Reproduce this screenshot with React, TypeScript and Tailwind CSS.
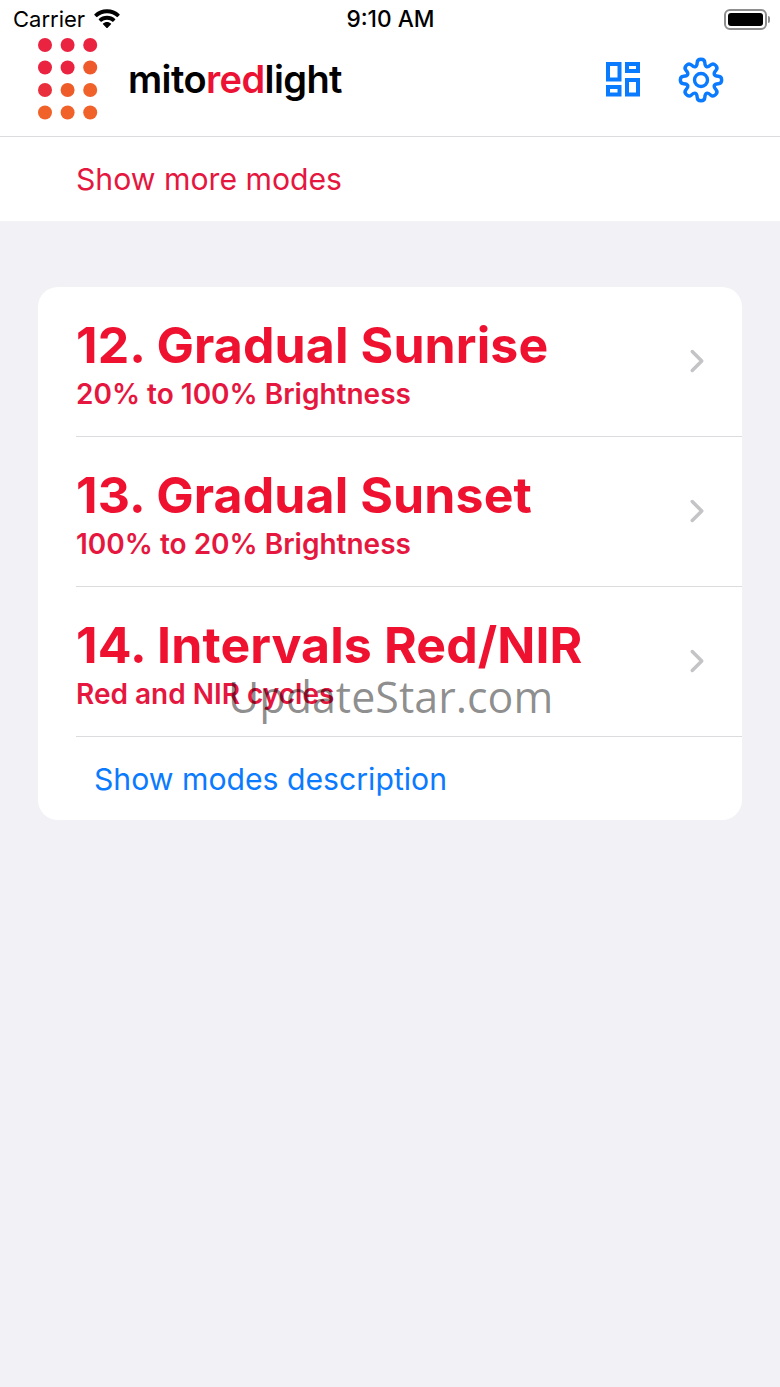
import React from 'react';
import { ChevronRight } from 'lucide-react';

const modes = [
  { title: '12. Gradual Sunrise', sub: '20% to 100% Brightness' },
  { title: '13. Gradual Sunset', sub: '100% to 20% Brightness' },
  { title: '14. Intervals Red/NIR', sub: 'Red and NIR cycles' },
];

const dotColors = [
  ['#ea2340', '#ea2340', '#ea2340'],
  ['#ea2340', '#ea2340', '#ef5a2c'],
  ['#e92e3c', '#ee5c2a', '#f0622a'],
  ['#f0622a', '#f0622a', '#f0622a'],
];

function LogoDots() {
  return (
    <svg width="60" height="82" viewBox="0 0 60 82" className="shrink-0">
      {dotColors.map((row, y) =>
        row.map((c, x) => <circle key={`${x}-${y}`} cx={7 + x * 22.6} cy={7 + y * 22.5} r="7" fill={c} />)
      )}
    </svg>
  );
}

function Wifi() {
  return (
    <svg width="28" height="21" viewBox="0 0 28 21" fill="#000">
      <path d="M14 4.2c3.8 0 7.3 1.5 9.9 3.9.2.2.5.2.7 0l2-2c.2-.2.2-.6 0-.8C23.300 2.100 18.900.3 14 .3S4.700 2.100 1.400 5.300c-.2.2-.2.6 0 .8l2 2c.2.2.5.2.7 0C6.700 5.700 10.200 4.200 14 4.200z" />
      <path d="M14 10.700c2.100 0 4 .8 5.500 2.100.2.200.5.200.7 0l2-2c.2-.2.2-.6 0-.8C20 7.900 17.200 6.800 14 6.800S8 7.900 5.800 9.900c-.2.2-.2.6 0 .8l2 2c.2.2.5.2.7 0 1.500-1.300 3.400-2 5.500-2z" />
      <path d="M18 15.300c.2-.2.2-.6 0-.8-1.100-.9-2.500-1.500-4-1.500s-2.900.6-4 1.500c-.2.2-.2.6 0 .8l3.600 3.600c.2.2.6.2.8 0l3.600-3.600z" />
    </svg>
  );
}

function Battery() {
  return (
    <div className="flex items-center gap-[1px]">
      <div className="w-[43px] h-[21px] rounded-[6px] border-2 border-[#8e8e8e] p-[2px]">
        <div className="w-full h-full rounded-[3px] bg-black" />
      </div>
      <div className="w-[2px] h-[7px] rounded-r-sm bg-[#8e8e8e]" />
    </div>
  );
}

function GridIcon() {
  return (
    <svg width="35" height="35" viewBox="0 0 35 35" fill="none" stroke="#0a7aff" strokeWidth="4">
      <rect x="2" y="2" width="11.500" height="15.500" />
      <rect x="21" y="2" width="11" height="7" />
      <rect x="2" y="25" width="11.500" height="7.500" />
      <rect x="21" y="18" width="11" height="14.500" />
    </svg>
  );
}

// gear outline, 8 rounded teeth smoothed through midpoints
function gearPath(R: number, r: number) {
  const pts: [number, number][] = [];
  const add = (rad: number, deg: number) => {
    const a = ((deg - 90) * Math.PI) / 180;
    pts.push([25 + rad * Math.cos(a), 25 + rad * Math.sin(a)]);
  };
  for (let i = 0; i < 8; i++) {
    const a = i * 45;
    add(R, a - 10);
    add(R, a + 10);
    add(r, a + 16);
    add(r, a + 29);
  }
  const mid = (p: [number, number], q: [number, number]) =>
    `${((p[0] + q[0]) / 2).toFixed(2)} ${((p[1] + q[1]) / 2).toFixed(2)}`;
  let d = `M${mid(pts[pts.length - 1], pts[0])}`;
  pts.forEach((p, i) => {
    d += ` Q${p[0].toFixed(2)} ${p[1].toFixed(2)} ${mid(p, pts[(i + 1) % pts.length])}`;
  });
  return d + 'Z';
}

function GearIcon() {
  return (
    <svg width="50" height="50" viewBox="0 0 50 50" fill="none" stroke="#0a7aff" strokeWidth="3.400">
      <path d={gearPath(21, 14.500)} />
      <circle cx="25" cy="25" r="6.500" />
    </svg>
  );
}

export default function App() {
  return (
    <div className="relative w-[780px] h-[1387px] overflow-hidden bg-[#f1f1f6] font-['Inter',sans-serif]">
      <header className="h-[137px] bg-white border-b border-[#dcdcde] flex flex-col">
        {/* status bar */}
        <div className="h-[38px] shrink-0 pl-[13px] pr-[10px] grid grid-cols-3 items-center text-black">
          <div className="flex items-center gap-[8px] text-[22px]">
            <span className="leading-none">Carrier</span>
            <Wifi />
          </div>
          <div className="text-center text-[22.700px] font-medium leading-none -ml-[2px]">9:10 AM</div>
          <div className="flex justify-end">
            <Battery />
          </div>
        </div>

        <div className="flex items-start pl-[38px] pr-[54px]">
          <LogoDots />
          <div className="ml-[30px] mt-[22px] text-[38px] font-semibold leading-none tracking-[-0.6px] text-black">
            mito<span className="text-[#ec1233]">red</span>light
          </div>
          <div className="ml-auto mt-[24px] flex items-center gap-[35px]">
            <GridIcon />
            <div className="-my-[8px]">
              <GearIcon />
            </div>
          </div>
        </div>
      </header>

      <div className="h-[84px] bg-white pl-[76px] pt-[1px] flex items-center text-[30.200px] text-[#e5173f]">
        Show more modes
      </div>

      <div className="mx-[38px] mt-[66px] rounded-[20px] bg-white overflow-hidden">
        {modes.map((m) => (
          <div key={m.title} className="h-[150px] ml-[38px] border-b border-[#dcdcde] flex items-center pr-[26px]">
            <div className="flex-1 mt-[2px]">
              <div className="text-[50px] leading-[58px] font-bold tracking-[0.1px] text-[#ee1230]">{m.title}</div>
              <div className="mt-[4px] text-[28px] leading-[32px] font-semibold text-[#e5173f]">{m.sub}</div>
            </div>
            <ChevronRight size={38} strokeWidth={2.2} className="text-[#c4c4c7] -mt-[1px]" />
          </div>
        ))}
        <div className="h-[83px] pl-[56px] pt-[2px] flex items-center text-[30.200px] text-[#0a7aff]">
          Show modes description
        </div>
      </div>

      <div className="absolute left-[228px] top-[669px] text-[43px] leading-[56px] text-black/45 font-['Open_Sans',sans-serif]">
        UpdateStar.com
      </div>
    </div>
  );
}
